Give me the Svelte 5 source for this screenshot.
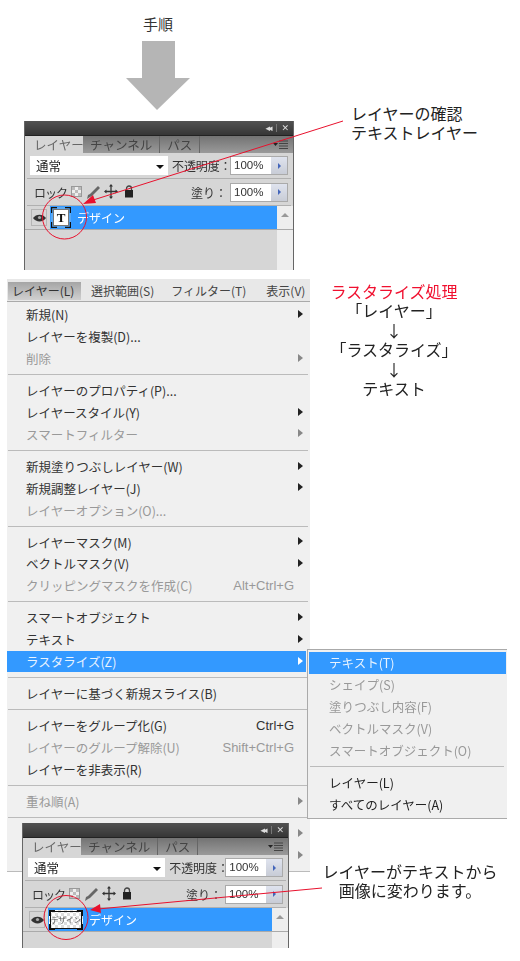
<script>
	const groups = [
		[
			{ label: '新規(N)', sub: true },
			{ label: 'レイヤーを複製(D)...' },
			{ label: '削除', off: true, sub: true }
		],
		[
			{ label: 'レイヤーのプロパティ(P)...' },
			{ label: 'レイヤースタイル(Y)', sub: true },
			{ label: 'スマートフィルター', off: true, sub: true }
		],
		[
			{ label: '新規塗りつぶしレイヤー(W)', sub: true },
			{ label: '新規調整レイヤー(J)', sub: true },
			{ label: 'レイヤーオプション(O)...', off: true }
		],
		[
			{ label: 'レイヤーマスク(M)', sub: true },
			{ label: 'ベクトルマスク(V)', sub: true },
			{ label: 'クリッピングマスクを作成(C)', off: true, key: 'Alt+Ctrl+G' }
		],
		[
			{ label: 'スマートオブジェクト', sub: true },
			{ label: 'テキスト', sub: true },
			{ label: 'ラスタライズ(Z)', sub: true, active: true }
		],
		[{ label: 'レイヤーに基づく新規スライス(B)' }],
		[
			{ label: 'レイヤーをグループ化(G)', key: 'Ctrl+G' },
			{ label: 'レイヤーのグループ解除(U)', off: true, key: 'Shift+Ctrl+G' },
			{ label: 'レイヤーを非表示(R)' }
		],
		[{ label: '重ね順(A)', off: true, sub: true }],
		// these two sit behind the lower panel, only their arrows show
		[
			{ label: '', off: true, sub: true },
			{ label: '', off: true, sub: true }
		]
	];

	const subGroups = [
		[
			{ label: 'テキスト(T)', active: true },
			{ label: 'シェイプ(S)', off: true },
			{ label: '塗りつぶし内容(F)', off: true },
			{ label: 'ベクトルマスク(V)', off: true },
			{ label: 'スマートオブジェクト(O)', off: true }
		],
		[{ label: 'レイヤー(L)' }, { label: 'すべてのレイヤー(A)' }]
	];
</script>

{#snippet spin()}
	<div class="field">
		<span class="value">100%</span>
		<span class="step"><i></i></span>
	</div>
{/snippet}

{#snippet corners(w, h)}
	<svg class="corners" width={w} height={h} viewBox="0 0 {w} {h}">
		<path
			d="M.5 6V.5H6M{w - 6} .5H{w - 0.5}V6M{w - 0.5} {h - 6}V{h - 0.5}H{w - 6}M6 {h - 0.5}H.5V{h - 6}"
			fill="none"
			stroke="#111"
			stroke-width="1.400"
		/>
	</svg>
{/snippet}

{#snippet panel(rasterized)}
	<div class="titlebar">
		<span class="collapse">◂◂</span>
		<span class="bar-sep"></span>
		<span class="close">✕</span>
	</div>
	<div class="tabs">
		<span class="tab on">レイヤー</span>
		<span class="tab">チャンネル</span>
		<span class="tab">パス</span>
		<svg class="panel-menu" width="16" height="10" viewBox="0 0 16 10">
			<path d="M0 3h5L2.500 6z" fill="#222" />
			<path d="M6 1h9M6 3.500h9M6 6h9M6 8.500h9" stroke="#444" />
		</svg>
	</div>
	<div class="row">
		<div class="select">通常<i></i></div>
		<span class="label">不透明度：</span>
		{@render spin()}
	</div>
	<div class="row second">
		<span class="lock">ロック：</span>
		<svg class="lock-icons" width="66" height="16" viewBox="0 0 66 16">
			<rect x="0.500" y="2.500" width="10" height="10" fill="#eee" stroke="#999" />
			<path d="M1 3h3v3H1zM7 3h3v3H7zM4 6h3v3H4zM1 9h3v3H1zM7 9h3v3H7z" fill="#bbb" />
			<path d="M16 15l1-4 2-1 8-8 2 2-8 8-2 1z" fill="#666" />
			<path d="M40 1v13M34 7.500h12" stroke="#333" stroke-width="1.300" />
			<path d="M40 0l2 2.500h-4zM40 15l2-2.500h-4zM33 7.500l2.500-2v4zM47 7.500l-2.500-2v4z" fill="#333" />
			<rect x="54" y="6" width="8" height="7.500" fill="#222" />
			<path d="M55.500 6V4.500a2.500 2.500 0 0 1 5 0V6" fill="none" stroke="#444" stroke-width="1.300" />
		</svg>
		<span class="fill-label">塗り：</span>
		{@render spin()}
	</div>
	<div class="layers">
		<div class="layer">
			<span class="eye">
				<svg width="13" height="10" viewBox="0 0 13 10">
					<path d="M0 5C3 .5 10 .5 13 5 10 9.500 3 9.500 0 5z" fill="#333" />
					<circle cx="6.500" cy="4.500" r="1.600" fill="#aaa" />
				</svg>
			</span>
			<div class="layer-name">
				{#if rasterized}
					<span class="thumb wide">{@render corners(34, 20)}<span class="mini">デザイン</span></span>
				{:else}
					<span class="thumb">{@render corners(20, 21)}<b>T</b></span>
				{/if}
				<span>デザイン</span>
			</div>
			<span class="scroll-top"><i></i></span>
		</div>
		<div class="empty"><span></span></div>
	</div>
{/snippet}

<div class="page">
	<div class="head">
		<div class="step-title">手順</div>
		<svg class="down" width="64" height="69" viewBox="0 0 64 69">
			<path d="M16 0h33v37h15L31 69 0 37h16z" fill="#b5b5b5" />
		</svg>
	</div>

	<section class="panel first">
		{@render panel(false)}
	</section>

	<div class="menu-wrap">
		<div class="menu">
			<div class="menubar">
				<span class="top on">レイヤー(L)</span>
				<span class="top">選択範囲(S)</span>
				<span class="top">フィルター(T)</span>
				<span class="top">表示(V)</span>
			</div>
			{#each groups as group, i}
				{#if i > 0}<hr />{/if}
				{#each group as item}
					<div class="item" class:off={item.off} class:active={item.active}>
						<span>{item.label}</span>
						{#if item.key}<span class="key">{item.key}</span>{/if}
						{#if item.sub}<i class="more"></i>{/if}
					</div>
				{/each}
			{/each}
		</div>

		<div class="submenu">
			{#each subGroups as group, i}
				{#if i > 0}<hr />{/if}
				{#each group as item}
					<div class="item" class:off={item.off} class:active={item.active}>
						<span>{item.label}</span>
					</div>
				{/each}
			{/each}
		</div>
	</div>

	<section class="panel last">
		{@render panel(true)}
	</section>

	<p class="note check">レイヤーの確認<br />テキストレイヤー</p>
	<p class="note raster">
		<em>ラスタライズ処理</em><br />「レイヤー」<br />↓<br />「ラスタライズ」<br />↓<br />テキスト
	</p>
	<p class="note changed">レイヤーがテキストから<br />画像に変わります。</p>

	<svg class="marks" width="520" height="961" viewBox="0 0 520 961">
		<g fill="none" stroke="#e8112d">
			<circle cx="64.500" cy="217" r="22" />
			<circle cx="66" cy="917.500" r="22" />
			<path d="M343 121L90 201" />
			<path d="M322 888L98 909" />
		</g>
		<path d="M83 204l10-9 3 8zM90 910l10-6 1 9z" fill="#e8112d" />
	</svg>
</div>

<style>
	:global(body) {
		background: #fff;
	}
	.page {
		position: relative;
		width: 520px;
		height: 961px;
		overflow: hidden;
		font-family: "Noto Sans CJK JP", "Noto Sans", sans-serif;
		color: #222;
	}
	.head {
		display: flex;
		flex-direction: column;
		align-items: center;
		width: 316px;
		height: 121px;
	}
	.step-title {
		margin-top: 13px;
		height: 28px;
		font-size: 15px;
		line-height: 22px;
		color: #333;
	}
	.down {
		display: block;
	}

	.panel {
		box-sizing: border-box;
		width: 270px;
		overflow: hidden;
		border-left: 1px solid #666;
		border-right: 1px solid #666;
		background: #d6d6d6;
		font-size: 12px;
		color: #333;
		filter: blur(0.35px);
	}
	.first {
		height: 149px;
		margin-left: 24px;
	}
	.last {
		position: absolute;
		left: 22px;
		top: 823px;
		width: 267px;
		height: 125px;
	}
	.titlebar {
		display: flex;
		align-items: center;
		justify-content: flex-end;
		gap: 4px;
		height: 14px;
		padding-right: 4px;
		background: linear-gradient(#525252, #363636);
		color: #ddd;
		font-size: 9px;
		font-family: "DejaVu Sans", sans-serif;
	}
	.collapse {
		letter-spacing: -2px;
		margin-right: 2px;
	}
	.bar-sep {
		width: 1px;
		height: 8px;
		background: #777;
	}
	.close {
		font-weight: bold;
	}
	.tabs {
		display: flex;
		align-items: flex-end;
		height: 18px;
		position: relative;
		background: linear-gradient(#737373, #9a9a9a);
		border-top: 1px solid #222;
		box-sizing: border-box;
	}
	.tab {
		height: 17px;
		line-height: 17px;
		padding: 0 7px;
		font-size: 12.500px;
		color: #444;
		border-right: 1px solid #666;
		white-space: nowrap;
	}
	.tab.on {
		width: 58px;
		box-sizing: border-box;
		padding-left: 9px;
		background: #d6d6d6;
		color: #666;
		border-right: 0;
	}
	.panel-menu {
		position: absolute;
		right: 4px;
		top: 4px;
	}
	.row {
		display: flex;
		align-items: center;
		height: 25px;
		margin: 0 2px;
		padding: 0 3px;
		border-bottom: 1px solid #b0b0b0;
	}
	.row.second {
		height: 26px;
	}
	.select {
		position: relative;
		box-sizing: border-box;
		width: 138px;
		height: 19px;
		line-height: 19px;
		padding-left: 6px;
		font-size: 12.500px;
		background: #fff;
		color: #222;
	}
	.select i {
		position: absolute;
		right: 4px;
		top: 9px;
		border: 4px solid transparent;
		border-top: 4px solid #111;
		border-bottom: 0;
	}
	.label {
		margin-left: 4px;
		width: 56px;
		white-space: nowrap;
		letter-spacing: -0.100px;
	}
	.field {
		display: flex;
		box-sizing: border-box;
		width: 58px;
		height: 19px;
		margin-left: auto;
		border: 1px solid #aaa;
		background: #fff;
	}
	.value {
		flex: 1;
		padding-left: 3px;
		line-height: 17px;
		font-size: 11.500px;
		font-family: "Liberation Sans", sans-serif;
	}
	.step {
		display: flex;
		align-items: center;
		justify-content: center;
		width: 16px;
		background: linear-gradient(#dfe3ee, #c8ccd6);
	}
	.step i {
		border: 3px solid transparent;
		border-left: 3px solid #4466bb;
		border-right: 0;
	}
	.lock {
		margin-left: 4px;
		width: 37px;
		white-space: nowrap;
		letter-spacing: -1px;
	}
	.lock-icons {
		display: block;
	}
	.fill-label {
		margin-left: auto;
	}
	.second .field {
		margin-left: 3px;
	}
	.layers {
		display: flex;
		flex-direction: column;
		height: 100%;
	}
	.layer {
		display: flex;
		flex: none;
		align-items: stretch;
		height: 24px;
		padding-left: 5px;
		border-bottom: 1px solid #aaa;
		box-sizing: border-box;
	}
	.eye {
		display: flex;
		align-items: center;
		justify-content: center;
		box-sizing: border-box;
		width: 16px;
		height: 17px;
		margin: 3px 3px 0 1px;
		border: 1px solid #b5b5b5;
	}
	.layer-name {
		flex: 1;
		display: flex;
		align-items: center;
		gap: 6px;
		background: #3399ff;
		color: #fff;
		font-size: 12px;
	}
	.thumb {
		position: relative;
		display: flex;
		align-items: center;
		justify-content: center;
		box-sizing: border-box;
		width: 20px;
		height: 21px;
		margin-left: 1px;
		outline: 1px solid #777;
		outline-offset: -3px;
		background: #fff;
		box-shadow: inset 0 0 0 2px #5aa9f5;
		color: #111;
		font-family: "Liberation Serif", serif;
		font-size: 13px;
	}
	.corners {
		position: absolute;
		left: 0;
		top: 0;
	}
	.thumb.wide {
		width: 34px;
		height: 20px;
		margin-left: 1px;
		outline: 1px solid #111;
		outline-offset: -2px;
		box-shadow: inset 0 -2px 0 #3399ff;
		background: repeating-conic-gradient(#ddd 0 25%, #fff 0 50%) 0 0 / 6px 6px;
	}
	.mini {
		font-family: "Noto Sans CJK JP", sans-serif;
		font-size: 7.500px;
		color: #555;
		white-space: nowrap;
	}
	.scroll-top {
		display: flex;
		justify-content: center;
		width: 16px;
		padding-top: 7px;
		box-sizing: border-box;
		background: #eee;
	}
	.scroll-top i {
		height: 0;
		border: 4px solid transparent;
		border-bottom: 4px solid #999;
		border-top: 0;
	}
	.empty {
		flex: 1;
		display: flex;
		justify-content: flex-end;
		height: 60px;
	}
	.empty span {
		width: 16px;
		height: 100px;
		background: #eee;
	}

	.menu-wrap {
		position: relative;
		margin-top: 9px;
		margin-left: 7px;
		font-size: 12.500px;
		filter: blur(0.35px);
	}
	.menu {
		box-sizing: border-box;
		width: 303px;
		height: 593px;
		background: #f0f0f0;
		border-bottom: 1px solid #bbb;
		color: #333;
	}
	.menubar {
		display: flex;
		align-items: center;
		height: 23px;
		padding: 1px 0 0 1px;
		box-sizing: border-box;
		border-bottom: 1px solid #aaa;
		background: #e8e8e8;
		color: #444;
		font-size: 12px;
		margin-bottom: 2px;
	}
	.top {
		white-space: nowrap;
		margin-right: 9px;
		padding: 0 4px;
		line-height: 18px;
	}
	.top:nth-child(3) {
		margin-right: 12px;
	}
	.top:nth-child(4) {
		margin-right: 0;
	}
	.top.on {
		box-sizing: border-box;
		width: 73px;
		margin-right: 6px;
		background: linear-gradient(#a5a5a5, #d0d0d0);
		color: #333;
	}
	.item {
		position: relative;
		display: flex;
		justify-content: space-between;
		align-items: center;
		height: 21.800px;
		padding: 0 16px 0 19px;
		white-space: nowrap;
	}
	.item.off {
		color: #999;
	}
	.item.active {
		background: #3399ff;
		color: #e8f3ff;
		margin-right: 4px;
		padding-right: 12px;
	}
	.key {
		font-family: "Liberation Sans", sans-serif;
		font-size: 13px;
	}
	.more {
		position: absolute;
		right: 7px;
		top: 6px;
		border: 4px solid transparent;
		border-left: 5px solid #222;
		border-right: 0;
	}
	.off .more {
		border-left-color: #888;
	}
	.active .more {
		right: 3px;
		border-left-color: #fff;
	}
	hr {
		height: 1px;
		margin: 4.700px 2px 4.700px 1px;
		border: 0;
		background: #bbb;
	}
	.submenu {
		position: absolute;
		left: 300px;
		top: 370px;
		box-sizing: border-box;
		width: 200px;
		height: 170px;
		padding: 2px 1px;
		background: #f0f0f0;
		border: 1px solid #aaa;
		border-right: 0;
		box-shadow: inset -1px 0 0 #f0f0f0;
	}
	.submenu .item {
		padding-left: 20px;
	}
	.submenu .item.active {
		margin: 0;
	}

	.note {
		position: absolute;
		margin: 0;
		font-size: 16px;
		line-height: 19px;
		color: #222;
		white-space: nowrap;
	}
	.check {
		left: 351px;
		top: 104px;
	}
	.raster {
		left: 274px;
		width: 240px;
		top: 282px;
		text-align: center;
		line-height: 19.400px;
	}
	.raster em {
		font-style: normal;
		color: #f0102f;
	}
	.changed {
		left: 322px;
		width: 176px;
		top: 862px;
		text-align: center;
		background: #fff;
	}
	.marks {
		position: absolute;
		left: 0;
		top: 0;
		pointer-events: none;
	}
</style>
